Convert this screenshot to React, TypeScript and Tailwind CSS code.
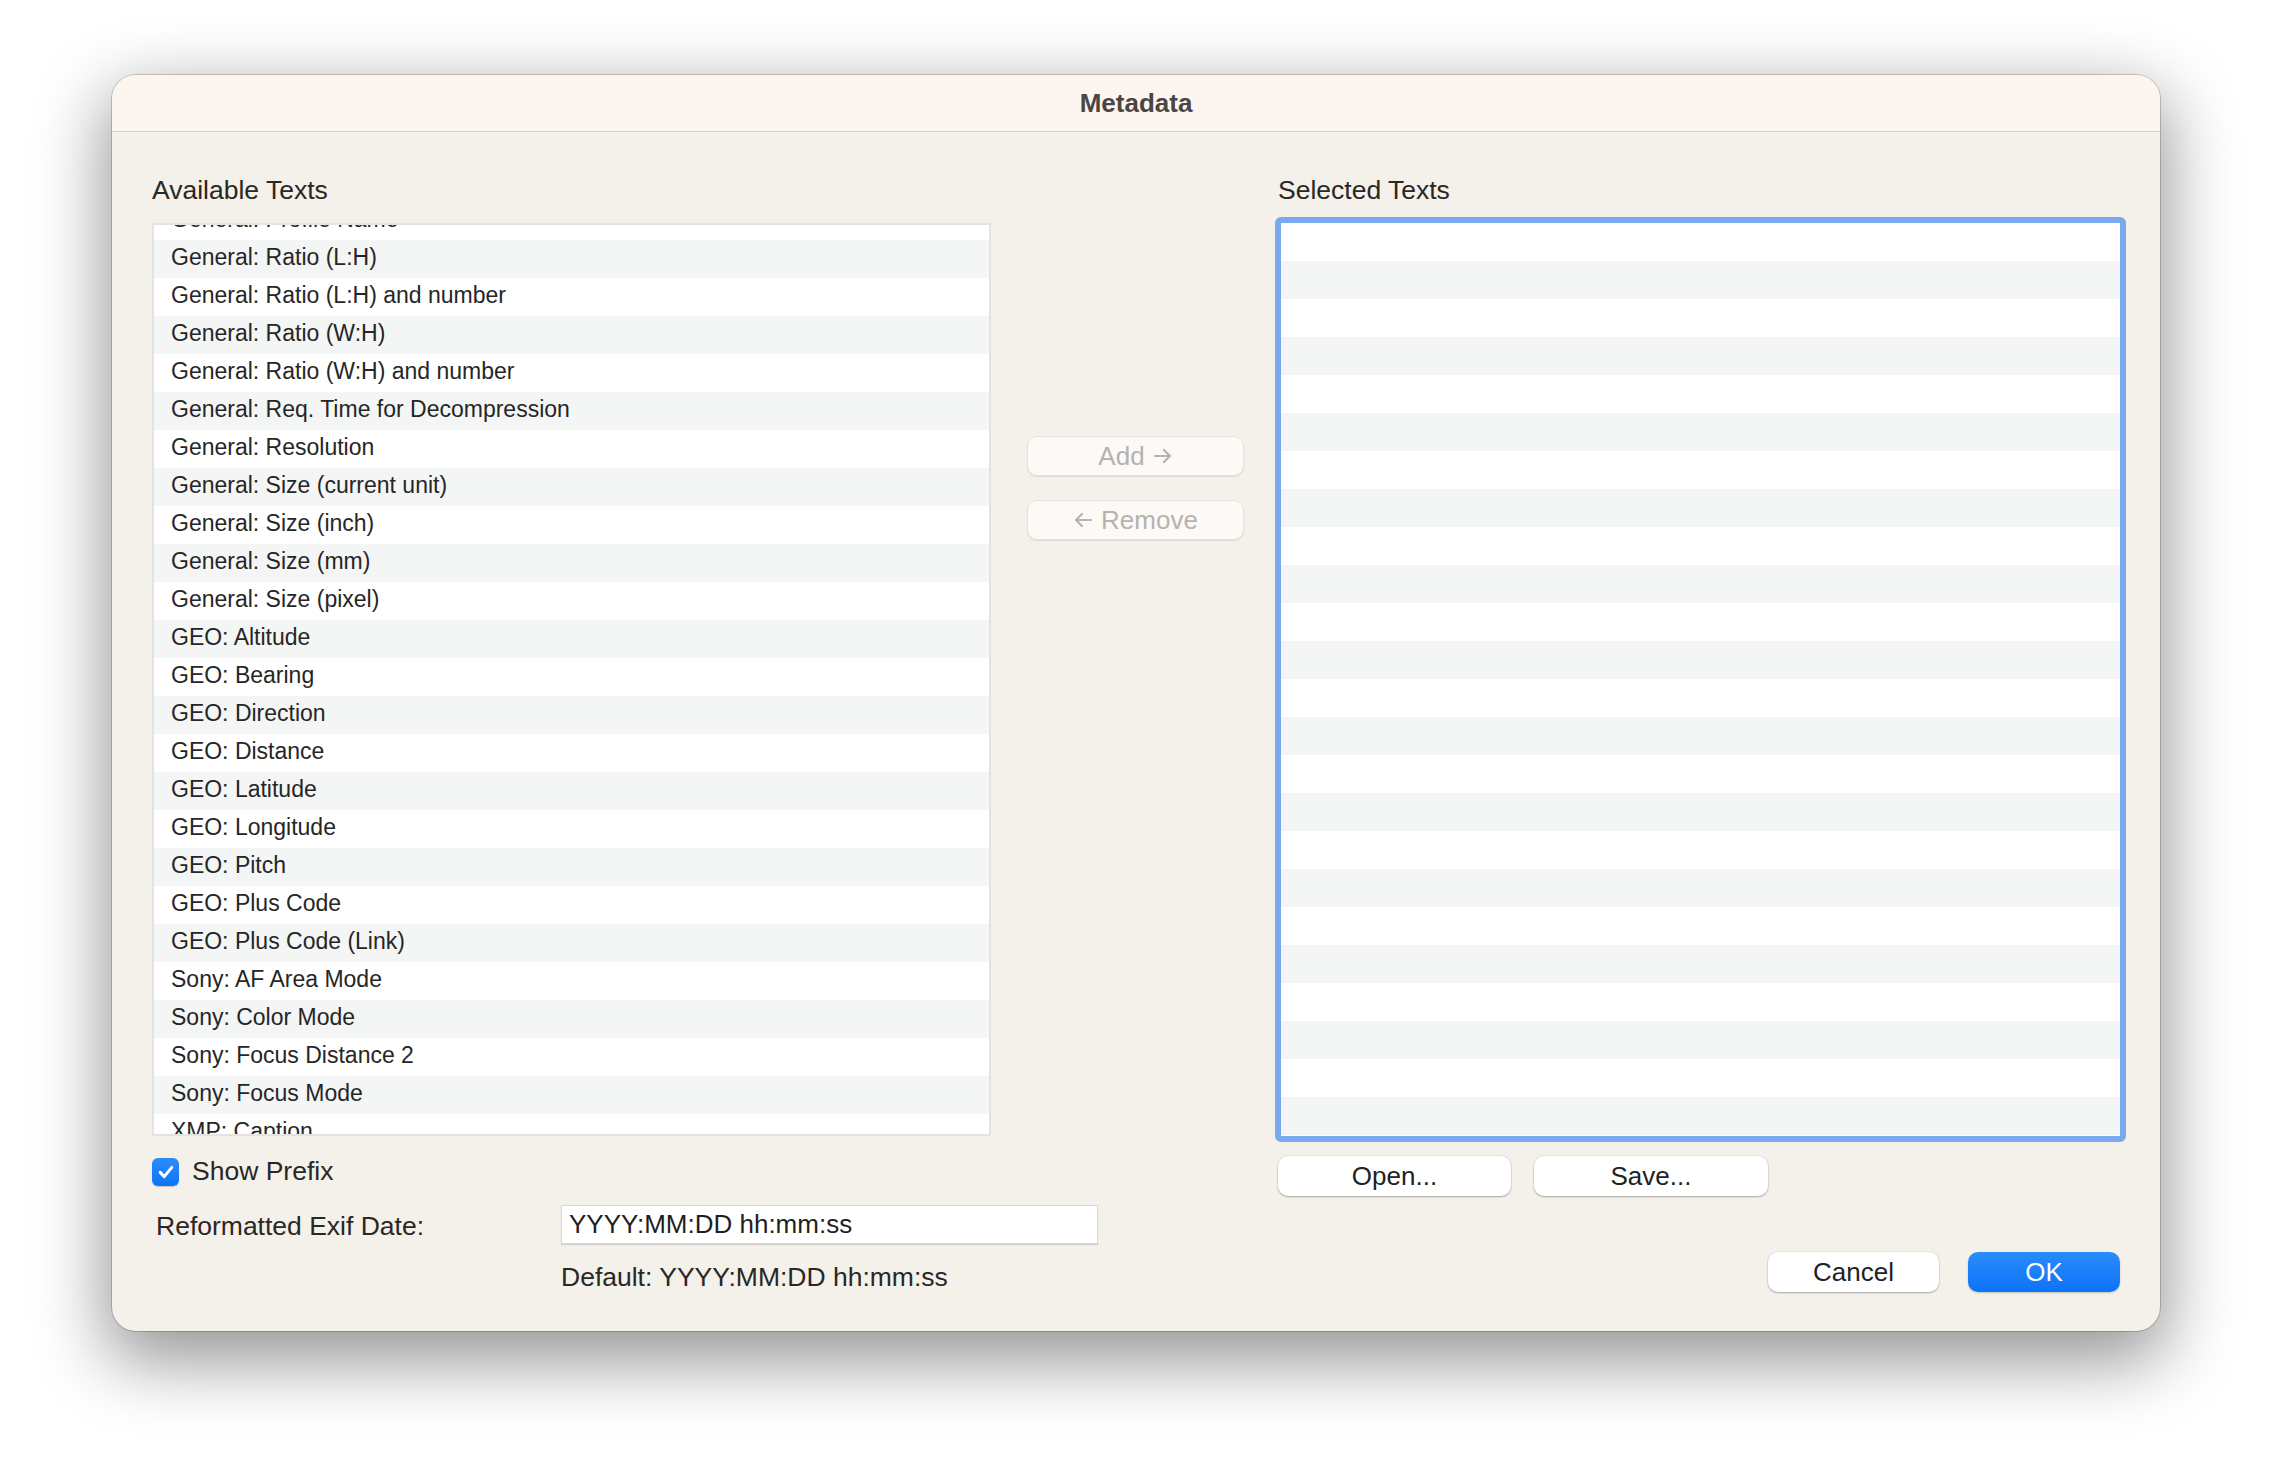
import React from "react";

const leftRows = [
  "General: Profile Name",
  "General: Ratio (L:H)",
  "General: Ratio (L:H) and number",
  "General: Ratio (W:H)",
  "General: Ratio (W:H) and number",
  "General: Req. Time for Decompression",
  "General: Resolution",
  "General: Size (current unit)",
  "General: Size (inch)",
  "General: Size (mm)",
  "General: Size (pixel)",
  "GEO: Altitude",
  "GEO: Bearing",
  "GEO: Direction",
  "GEO: Distance",
  "GEO: Latitude",
  "GEO: Longitude",
  "GEO: Pitch",
  "GEO: Plus Code",
  "GEO: Plus Code (Link)",
  "Sony: AF Area Mode",
  "Sony: Color Mode",
  "Sony: Focus Distance 2",
  "Sony: Focus Mode",
  "XMP: Caption",
];

const rightRows = Array.from({ length: 24 }, (_, i) => i);

function PlainButton({ label, className }: { label: string; className: string }) {
  return (
    <div
      className={
        "h-[40px] rounded-[10px] bg-white flex items-center justify-center text-[26px] text-[#222222] shadow-[0_1px_2px_rgba(0,0,0,0.28),0_0_0_1px_rgba(0,0,0,0.04)] " +
        className
      }
    >
      {label}
    </div>
  );
}

function Arrow({ dir }: { dir: "left" | "right" }) {
  return (
    <svg width="20" height="18" viewBox="0 0 20 18" className="shrink-0">
      {dir === "right" ? (
        <path d="M2 9 H17 M11 3 L17 9 L11 15" fill="none" stroke="#b6b2ae" strokeWidth="2.2" strokeLinecap="round" strokeLinejoin="round" />
      ) : (
        <path d="M18 9 H3 M9 3 L3 9 L9 15" fill="none" stroke="#b6b2ae" strokeWidth="2.2" strokeLinecap="round" strokeLinejoin="round" />
      )}
    </svg>
  );
}

export default function App() {
  return (
    <div className="w-[2272px] h-[1480px] bg-white pl-[112px] pt-[75px] font-['Liberation_Sans','DejaVu_Sans',sans-serif]">
      <div className="w-[2048px] h-[1256px] rounded-[24px] overflow-hidden bg-[#f4f0ea] flex flex-col shadow-[0_0_0_1px_rgba(0,0,0,0.18),0_24px_70px_6px_rgba(0,0,0,0.42)]">
        {/* Title bar */}
        <div className="h-[57px] shrink-0 bg-[#fcf5f0] border-b border-[#d8d3ce] flex items-center justify-center">
          <span className="text-[26px] font-bold text-[#4a4643] leading-none">Metadata</span>
        </div>

        {/* Body */}
        <div className="flex-1 pl-[40px] pr-[34px] pt-[42px]">
          <div className="flex">
            {/* Left column */}
            <div className="w-[839px] shrink-0">
              <div className="text-[26.5px] leading-[32px] text-[#2a2725]">Available Texts</div>
              <div className="mt-[17px] h-[913px] border-2 border-[#e5e3e0] bg-white overflow-hidden">
                <div className="-mt-[23px]">
                  {leftRows.map((t, i) => (
                    <div
                      key={t}
                      className={
                        "h-[38px] flex items-center pl-[17px] pb-[4px] text-[23px] text-[#262626] whitespace-nowrap " +
                        (i % 2 === 1 ? "bg-[#f4f5f5]" : "bg-white")
                      }
                    >
                      {t}
                    </div>
                  ))}
                </div>
              </div>
              <div className="mt-[22px] flex items-center h-[28px]">
                <div className="w-[27px] h-[28px] rounded-[6px] bg-gradient-to-b from-[#2a8cfb] to-[#0b74f6] flex items-center justify-center shadow-[0_1px_1px_rgba(0,0,0,0.2)]">
                  <svg width="20" height="20" viewBox="0 0 20 20">
                    <path d="M4.2 10.4 L8.2 14.6 L15.8 5.4" fill="none" stroke="white" strokeWidth="3" strokeLinecap="round" strokeLinejoin="round" />
                  </svg>
                </div>
                <span className="ml-[13px] text-[26.5px] text-[#2a2725]">Show Prefix</span>
              </div>
            </div>

            {/* Middle column */}
            <div className="w-[284px] shrink-0 pl-[36px] pt-[262px] flex flex-col gap-[24px]">
              <div className="w-[217px] h-[40px] rounded-[10px] bg-[#fcfaf7] border border-[#e6e2dd] shadow-[0_1px_1px_rgba(0,0,0,0.1)] flex items-center justify-center gap-[8px] text-[26px] text-[#b6b2ae]">
                <span>Add</span>
                <Arrow dir="right" />
              </div>
              <div className="w-[217px] h-[40px] rounded-[10px] bg-[#fcfaf7] border border-[#e6e2dd] shadow-[0_1px_1px_rgba(0,0,0,0.1)] flex items-center justify-center gap-[8px] text-[26px] text-[#b6b2ae]">
                <Arrow dir="left" />
                <span>Remove</span>
              </div>
            </div>

            {/* Right column */}
            <div className="w-[851px] shrink-0">
              <div className="pl-[3px] text-[26.5px] leading-[32px] text-[#2a2725]">Selected Texts</div>
              <div className="mt-[11px] h-[925px] border-[6px] border-[#7aa8ef] rounded-[6px] bg-white overflow-hidden">
                {rightRows.map((i) => (
                  <div key={i} className={"h-[38px] " + (i % 2 === 1 ? "bg-[#f4f5f5]" : "bg-white")} />
                ))}
              </div>
              <div className="mt-[14px] pl-[3px] flex gap-[23px]">
                <PlainButton label="Open..." className="w-[233px]" />
                <PlainButton label="Save..." className="w-[234px]" />
              </div>
            </div>
          </div>

          {/* Bottom area */}
          <div className="flex">
            <div className="pt-[7px]">
              <div className="flex items-center">
                <div className="w-[409px] pl-[4px] pt-[4px] text-[26.5px] text-[#2a2725]">Reformatted Exif Date:</div>
                <div className="w-[537px] h-[39px] bg-white border border-[#dcd9d5] shadow-[0_1px_1px_rgba(0,0,0,0.14)] flex items-center pl-[7px] text-[26px] text-[#1f1f1f]">
                  YYYY:MM:DD hh:mm:ss
                </div>
              </div>
              <div className="mt-[14px] pl-[409px] text-[26.5px] leading-[32px] text-[#2a2725]">
                Default: YYYY:MM:DD hh:mm:ss
              </div>
            </div>
            <div className="ml-auto pt-[56px] pr-[6px] flex gap-[29px]">
              <PlainButton label="Cancel" className="w-[171px]" />
              <div className="w-[152px] h-[40px] rounded-[10px] bg-gradient-to-b from-[#2a8bfb] to-[#0a73f6] flex items-center justify-center text-[26px] text-white shadow-[0_1px_2px_rgba(0,0,0,0.2)]">
                OK
              </div>
            </div>
          </div>
        </div>
      </div>
    </div>
  );
}
